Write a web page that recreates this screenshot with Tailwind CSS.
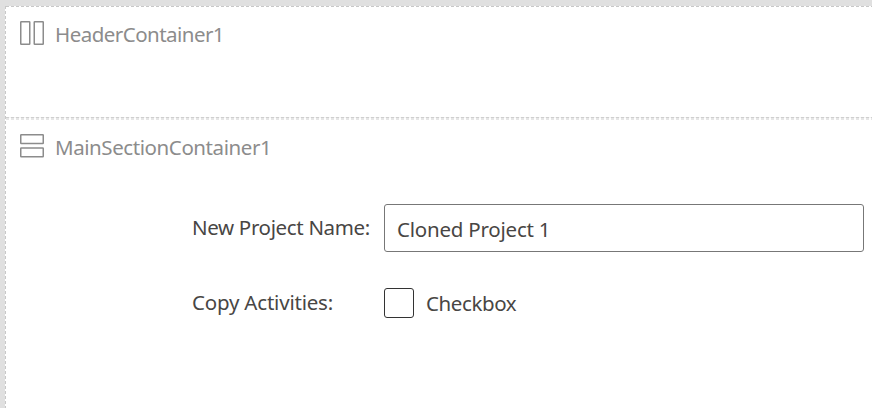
<!DOCTYPE html>
<html lang="en">
<head>
<meta charset="utf-8">
<title>Form</title>
<script src="https://cdn.jsdelivr.net/npm/@tailwindcss/browser@4"></script>
</head>
<body class="h-[408px] w-[872px] overflow-hidden bg-[#e0e0e0] pl-[5px] pt-[6px] font-['Noto_Sans','Open_Sans',sans-serif]">
<main class="flex h-[402px] bg-white">
  <div class="w-px shrink-0 bg-[repeating-linear-gradient(180deg,#c8c8c8_0_3px,#fff_3px_5px)]"></div>
  <div class="flex grow flex-col">
    <div class="h-px shrink-0 bg-[repeating-linear-gradient(90deg,#c8c8c8_0_3px,#fff_3px_5px)]"></div>
    <header class="flex h-[110px] shrink-0 items-start pl-[14px] pt-[13px] text-[#8c8c8c]">
      <svg class="mt-px h-6 w-6 shrink-0" viewBox="0 0 24 24" fill="none" stroke="#8c8c8c" stroke-width="1.5"><rect x=".75" y=".75" width="9" height="22.5" rx=".5"/><rect x="14.25" y=".75" width="9" height="22.5" rx=".5"/></svg>
      <span class="ml-[11px] text-[20.5px] leading-[28px] tracking-[-0.53px]">HeaderContainer1</span>
    </header>
    <div class="h-px shrink-0 bg-[repeating-linear-gradient(90deg,#cfcfcf_0_3px,#f4f4f4_3px_5px)]"></div>
    <div class="h-[2px] shrink-0 bg-[repeating-linear-gradient(90deg,#e6e6e6_0_3px,#fff_3px_5px)]"></div>
    <section class="flex flex-col">
      <div class="flex h-[84px] items-start pl-[14px] pt-[13px] text-[#8c8c8c]">
        <svg class="mt-px h-6 w-6 shrink-0" viewBox="0 0 24 24" fill="none" stroke="#8c8c8c" stroke-width="1.5"><rect x=".75" y=".75" width="22.5" height="8.7" rx=".5"/><rect x=".75" y="14.05" width="22.5" height="8.7" rx=".5"/></svg>
        <span class="ml-[11px] text-[20.5px] leading-[28px] tracking-[-0.42px]">MainSectionContainer1</span>
      </div>
      <div class="flex h-[48px] items-center pl-[186px] text-[20.5px] leading-[28px] text-[#484644]">
        <label for="name" class="w-[192px] shrink-0 pb-[2px] tracking-[-0.34px]">New Project Name:</label>
        <input id="name" value="Cloned Project 1" class="h-[48px] w-[480px] rounded-[3px] border border-[#777] bg-white pl-[12px] pt-px tracking-[-0.22px] text-[#484644]">
      </div>
      <div class="mt-[36px] flex h-[30px] items-center pl-[186px] text-[20.5px] leading-[28px] text-[#484644]">
        <span class="w-[192px] shrink-0 pb-[2px] tracking-[-0.2px]">Copy Activities:</span>
        <span class="h-[30px] w-[30px] rounded-[3px] border border-[#333]"></span>
        <span class="ml-[12px] tracking-[-0.4px]">Checkbox</span>
      </div>
    </section>
  </div>
</main>
</body>
</html>
